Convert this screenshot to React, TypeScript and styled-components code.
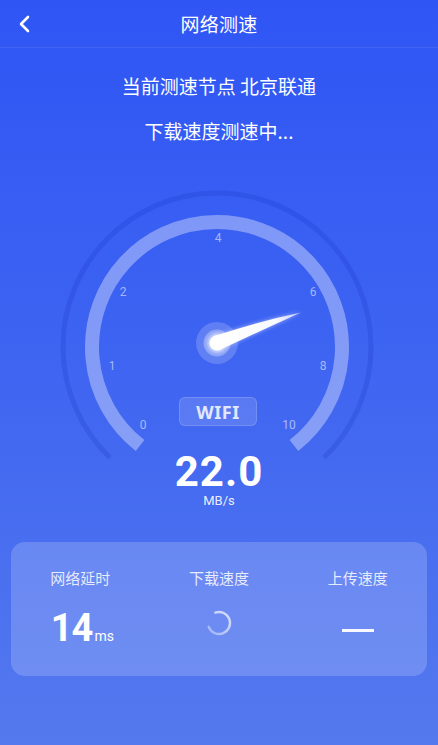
import React from "react";
import styled, { createGlobalStyle } from "styled-components";

const GlobalStyle = createGlobalStyle`
  html, body {
    margin: 0;
    padding: 0;
  }
  body {
    font-family: "Noto Sans CJK SC", "Noto Sans", sans-serif;
    -webkit-font-smoothing: antialiased;
  }
`;

const CX = 217;
const CY = 157;

// arc through the top, with both ends `deg` below horizontal
const arcPath = (r: number, deg: number) => {
	const a = (deg * Math.PI) / 180;
	const dx = r * Math.cos(a);
	const dy = r * Math.sin(a);
	return `M ${CX - dx} ${CY + dy} A ${r} ${r} 0 1 1 ${CX + dx} ${CY + dy}`;
};

const ticks = [
	{ label: "0", x: 143, y: 235 },
	{ label: "1", x: 112, y: 176 },
	{ label: "2", x: 123, y: 102 },
	{ label: "4", x: 218, y: 48 },
	{ label: "6", x: 313, y: 102 },
	{ label: "8", x: 323, y: 176 },
	{ label: "10", x: 289, y: 235 },
];

const stats = [
	{ label: "网络延时", kind: "ping" },
	{ label: "下载速度", kind: "loading" },
	{ label: "上传速度", kind: "empty" },
];

const Page = styled.div`
	width: 438px;
	height: 745px;
	overflow: hidden;
	display: flex;
	flex-direction: column;
	background: linear-gradient(180deg, #2f55f5 0%, #3d63f2 45%, #5479ee 100%);
	color: #fff;
`;

const Header = styled.header`
	height: 47px;
	display: grid;
	grid-template-columns: 48px 1fr 48px;
	align-items: center;
	border-bottom: 1px solid rgba(255, 255, 255, 0.08);
`;

const BackButton = styled.button`
	background: transparent;
	border: none;
	padding: 0 0 0 18px;
	height: 100%;
	display: flex;
	align-items: center;
	cursor: pointer;
`;

const Title = styled.h1`
	margin: 0;
	text-align: center;
	font-size: 19px;
	font-weight: 400;
	letter-spacing: 0.3px;
`;

const Info = styled.div`
	padding-top: 25px;
	display: flex;
	flex-direction: column;
	align-items: center;
	gap: 19px;
`;

const InfoLine = styled.p`
	margin: 0;
	font-size: 19px;
	line-height: 26px;
	font-weight: 400;
`;

const Gauge = styled.div`
	position: relative;
	margin-top: 46px;
	height: 320px;
`;

const Dial = styled.svg`
	display: block;
	width: 438px;
	height: 290px;
`;

const Badge = styled.div`
	position: absolute;
	left: 179px;
	top: 207px;
	width: 78px;
	height: 29px;
	box-sizing: border-box;
	border-radius: 6px;
	background: rgba(255, 255, 255, 0.13);
	border: 1px solid rgba(255, 255, 255, 0.16);
	display: flex;
	align-items: center;
	justify-content: center;
	font-family: "Noto Sans", sans-serif;
	font-weight: 700;
	font-size: 18px;
	letter-spacing: 0.5px;
	color: #e2e8ff;
`;

const Readout = styled.div`
	position: absolute;
	left: 0;
	right: 0;
	top: 261px;
	display: flex;
	flex-direction: column;
	align-items: center;
`;

const Speed = styled.span`
	font-family: Roboto, "Noto Sans", sans-serif;
	font-weight: 700;
	font-size: 42px;
	line-height: 42px;
	letter-spacing: 1px;
`;

const Unit = styled.span`
	font-family: Roboto, "Noto Sans", sans-serif;
	font-size: 13px;
	line-height: 14px;
	margin-top: 1px;
	color: rgba(255, 255, 255, 0.9);
`;

const Card = styled.section`
	margin: 32px 11px 0;
	height: 134px;
	box-sizing: border-box;
	border-radius: 14px;
	background: rgba(255, 255, 255, 0.18);
	display: grid;
	grid-template-columns: repeat(3, 1fr);
	padding-top: 26px;
`;

const Stat = styled.div`
	display: flex;
	flex-direction: column;
	align-items: center;
`;

const StatLabel = styled.span`
	font-size: 15px;
	line-height: 20px;
	color: rgba(255, 255, 255, 0.85);
`;

const StatValue = styled.div`
	margin-top: 14px;
	height: 46px;
	display: flex;
	align-items: center;
	justify-content: center;
`;

const Ping = styled.span`
	font-family: Roboto, "Noto Sans", sans-serif;
	font-weight: 700;
	font-size: 38px;
	line-height: 46px;
	letter-spacing: -1px;
	margin: 14px 0 0 4px;

	small {
		font-size: 14px;
		font-weight: 400;
		letter-spacing: 0;
		margin-left: 2px;
	}
`;

const Dash = styled.span`
	width: 32px;
	height: 3px;
	margin-top: 10px;
	background: rgba(255, 255, 255, 0.95);
`;

const Chevron = () => (
	<svg width="12" height="18" viewBox="0 0 12 18">
		<polyline
			points="10,2 3,9 10,16"
			fill="none"
			stroke="#fff"
			strokeWidth="2.6"
			strokeLinecap="round"
			strokeLinejoin="round"
		/>
	</svg>
);

const Spinner = () => (
	<svg width="28" height="28" viewBox="0 0 28 28" style={{ marginTop: -4 }}>
		<defs>
			<linearGradient id="spin" x1="0" y1="1" x2="1" y2="0">
				<stop offset="0" stopColor="#fff" stopOpacity="0.35" />
				<stop offset="1" stopColor="#fff" stopOpacity="0.75" />
			</linearGradient>
		</defs>
		<path
			d="M 3.7 17.8 A 11 11 0 1 0 10.2 3.7"
			fill="none"
			stroke="url(#spin)"
			strokeWidth="2.4"
			strokeLinecap="round"
		/>
	</svg>
);

const Needle = () => (
	<g>
		<defs>
			<filter id="glow" x="-50%" y="-50%" width="200%" height="200%">
				<feGaussianBlur stdDeviation="2.2" />
			</filter>
			<linearGradient id="needle" x1="217" y1="153" x2="300" y2="123" gradientUnits="userSpaceOnUse">
				<stop offset="0" stopColor="#fff" />
				<stop offset="0.7" stopColor="#fff" stopOpacity="0.95" />
				<stop offset="1" stopColor="#fff" stopOpacity="0.6" />
			</linearGradient>
		</defs>
		<circle cx="217" cy="153" r="21" fill="rgba(255,255,255,0.18)" />
		<circle cx="217" cy="153" r="13.5" fill="rgba(255,255,255,0.28)" />
		<circle cx="217" cy="153" r="9" fill="#fff" opacity="0.8" filter="url(#glow)" />
		<path d="M 214.6 145.9 Q 260 131 301 122.5 Q 262 140 219.4 160.1 Z" fill="#fff" opacity="0.5" filter="url(#glow)" />
		<path d="M 214.6 145.9 Q 260 131 301 122.5 Q 262 140 219.4 160.1 Z" fill="url(#needle)" />
		<circle cx="217" cy="153" r="7.5" fill="#fff" />
	</g>
);

const App = () => {
	return (
		<>
			<GlobalStyle />
			<Page>
				<Header>
					<BackButton aria-label="返回">
						<Chevron />
					</BackButton>
					<Title>网络测速</Title>
					<span />
				</Header>

				<Info>
					<InfoLine>当前测速节点 北京联通</InfoLine>
					<InfoLine>下载速度测速中...</InfoLine>
				</Info>

				<Gauge>
					<Dial viewBox="0 0 438 290">
						<path d={arcPath(154, 46)} fill="none" stroke="rgba(20,45,190,0.2)" strokeWidth="5" />
						<path d={arcPath(125, 52)} fill="none" stroke="rgba(255,255,255,0.36)" strokeWidth="14" />
						{ticks.map((t) => (
							<text
								key={t.label}
								x={t.x}
								y={t.y}
								textAnchor="middle"
								dominantBaseline="central"
								fontFamily="Roboto, 'Noto Sans', sans-serif"
								fontSize="12"
								fill="rgba(255,255,255,0.55)"
							>
								{t.label}
							</text>
						))}
						<Needle />
					</Dial>
					<Badge>WIFI</Badge>
					<Readout>
						<Speed>22.0</Speed>
						<Unit>MB/s</Unit>
					</Readout>
				</Gauge>

				<Card>
					{stats.map((s) => (
						<Stat key={s.label}>
							<StatLabel>{s.label}</StatLabel>
							<StatValue>
								{s.kind === "ping" && (
									<Ping>
										14<small>ms</small>
									</Ping>
								)}
								{s.kind === "loading" && <Spinner />}
								{s.kind === "empty" && <Dash />}
							</StatValue>
						</Stat>
					))}
				</Card>
			</Page>
		</>
	);
};

export default App;
